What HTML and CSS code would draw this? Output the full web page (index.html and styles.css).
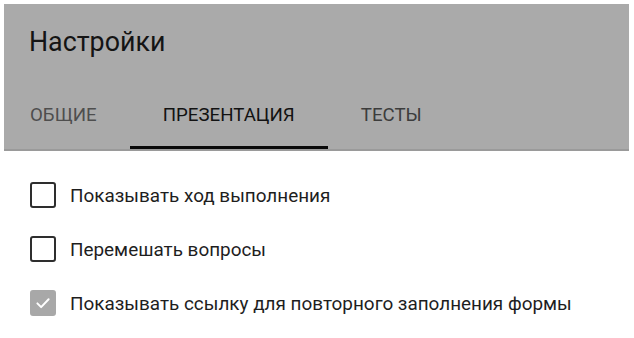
FILE: index.html
```html
<!DOCTYPE html>
<html lang="ru">
<head>
<meta charset="utf-8">
<link rel="stylesheet" href="styles.css">
</head>
<body>
<div class="page">
  <header class="header">
    <h1 class="title">Настройки</h1>
    <nav class="tabs">
      <div class="tab tab-first">ОБЩИЕ</div>
      <div class="tab tab-active">ПРЕЗЕНТАЦИЯ</div>
      <div class="tab tab-dark">ТЕСТЫ</div>
    </nav>
  </header>
  <div class="options">
    <label class="option">
      <span class="box"></span>
      <span class="label">Показывать ход выполнения</span>
    </label>
    <label class="option">
      <span class="box"></span>
      <span class="label">Перемешать вопросы</span>
    </label>
    <label class="option">
      <span class="box box-checked">
        <svg viewBox="0 0 24 24" width="18" height="18"><path d="M4.5 12.5 L9.5 17.5 L19.5 7" fill="none" stroke="#fff" stroke-width="2.6" stroke-linecap="round" stroke-linejoin="round"/></svg>
      </span>
      <span class="label">Показывать ссылку для повторного заполнения формы</span>
    </label>
  </div>
</div>
</body>
</html>
```

FILE: styles.css
```css
html, body {
  margin: 0;
  padding: 0;
  background: #ffffff;
}
body {
  font-family: Roboto, "Noto Sans", "Liberation Sans", sans-serif;
  width: 634px;
  height: 338px;
  overflow: hidden;
}
.page {
  padding: 4px 5px 0 4px;
}
.header {
  background: #aaaaaa;
  border-bottom: 2px solid #9a9a9a;
  height: 145px;
  display: flex;
  flex-direction: column;
}
.title {
  margin: 0;
  padding: 22px 0 0 25px;
  font-size: 26.8px;
  font-weight: 400;
  line-height: 32px;
  color: #141414;
  height: 70px;
  box-sizing: border-box;
}
.tabs {
  display: flex;
  margin-top: auto;
  height: 72px;
}
.tab {
  padding: 6px 33px 0;
  font-size: 18.7px;
  font-weight: 400;
  color: #4e4e4e;
  display: flex;
  align-items: center;
  box-sizing: border-box;
  border-bottom: 3px solid transparent;
}
.tab-first {
  padding-left: 26px;
}
.tab-active {
  color: #121212;
  border-bottom-color: #0a0a0a;
}
.tab-dark {
  color: #3c3c3c;
}
.options {
  padding: 31px 0 0 26px;
  display: flex;
  flex-direction: column;
  gap: 28px;
}
.option {
  display: flex;
  align-items: center;
  height: 26px;
}
.box {
  width: 26px;
  height: 26px;
  box-sizing: border-box;
  border: 2.8px solid #2e2e2e;
  border-radius: 3px;
  display: flex;
  align-items: center;
  justify-content: center;
  flex: none;
}
.box-checked {
  background: #a8a8a8;
  border-color: #a8a8a8;
}
.label {
  margin-left: 14px;
  font-size: 18.9px;
  color: #1e1e1e;
}
```
